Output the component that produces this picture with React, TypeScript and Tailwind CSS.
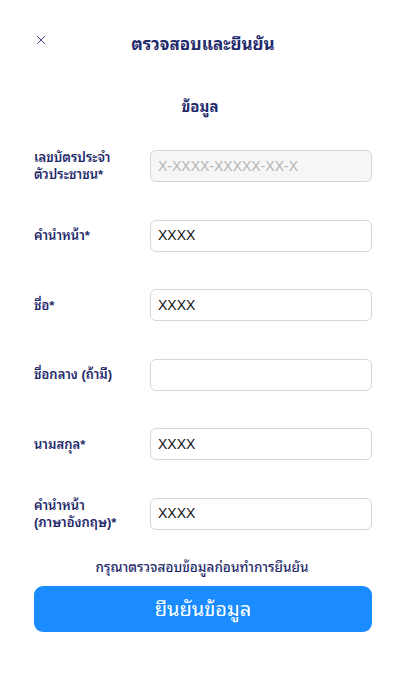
import { X } from 'lucide-react'

const rows = [
  { label: 'เลขบัตรประจำ\nตัวประชาชน*', value: '', placeholder: 'X-XXXX-XXXXX-XX-X', disabled: true },
  { label: 'คำนำหน้า*', value: 'XXXX' },
  { label: 'ชื่อ*', value: 'XXXX' },
  { label: 'ชื่อกลาง (ถ้ามี)', value: '' },
  { label: 'นามสกุล*', value: 'XXXX' },
  { label: 'คำนำหน้า\n(ภาษาอังกฤษ)*', value: 'XXXX' },
]

export default function App() {
  return (
    <div className="w-[400px] h-[693px] bg-white font-['Liberation_Sans','Noto_Sans_Thai_Looped',sans-serif] text-[#1f2a6b]">
      {/* Header */}
      <div className="relative h-[60px] pt-[33px]">
        <button className="absolute left-[34px] top-[33px] text-[#1f2a6b]" aria-label="close">
          <X className="w-[14px] h-[14px]" strokeWidth={1.5} />
        </button>
        <h1 className="text-center text-[17px] font-bold leading-[24px] pl-[6px]">ตรวจสอบและยืนยัน</h1>
      </div>

      <h2 className="mt-[37px] text-center text-[15px] font-bold leading-[20px]">ข้อมูล</h2>

      {/* Form */}
      <div className="mt-[33px] pl-[34px] pr-[28px] flex flex-col gap-[37.6px]">
        {rows.map((r) => (
          <div key={r.label} className="flex items-center h-[32px]">
            <label className="w-[116px] shrink-0 whitespace-pre-line text-[13px] font-semibold leading-[17px]">
              {r.label}
            </label>
            <div
              className={`flex-1 h-[32px] rounded-[6px] border border-[#d6d6d6] flex items-center px-[7px] text-[14px] ${
                r.disabled ? 'bg-[#f6f6f6]' : 'bg-white'
              }`}
            >
              {r.value ? (
                <span className="text-[#111]">{r.value}</span>
              ) : (
                <span className="text-[#b4b4b4]">{r.placeholder}</span>
              )}
            </div>
          </div>
        ))}
      </div>

      {/* Footer */}
      <p className="mt-[29px] text-center text-[13.5px] font-medium leading-[18px] pl-[4px]">กรุณาตรวจสอบข้อมูลก่อนทำการยืนยัน</p>
      <div className="pr-[28px] pl-[34px] mt-[9px]">
        <button className="w-full h-[46px] rounded-[9px] bg-[#1a8cff] text-white text-[20px] leading-[28px]">
          ยืนยันข้อมูล
        </button>
      </div>
    </div>
  )
}
